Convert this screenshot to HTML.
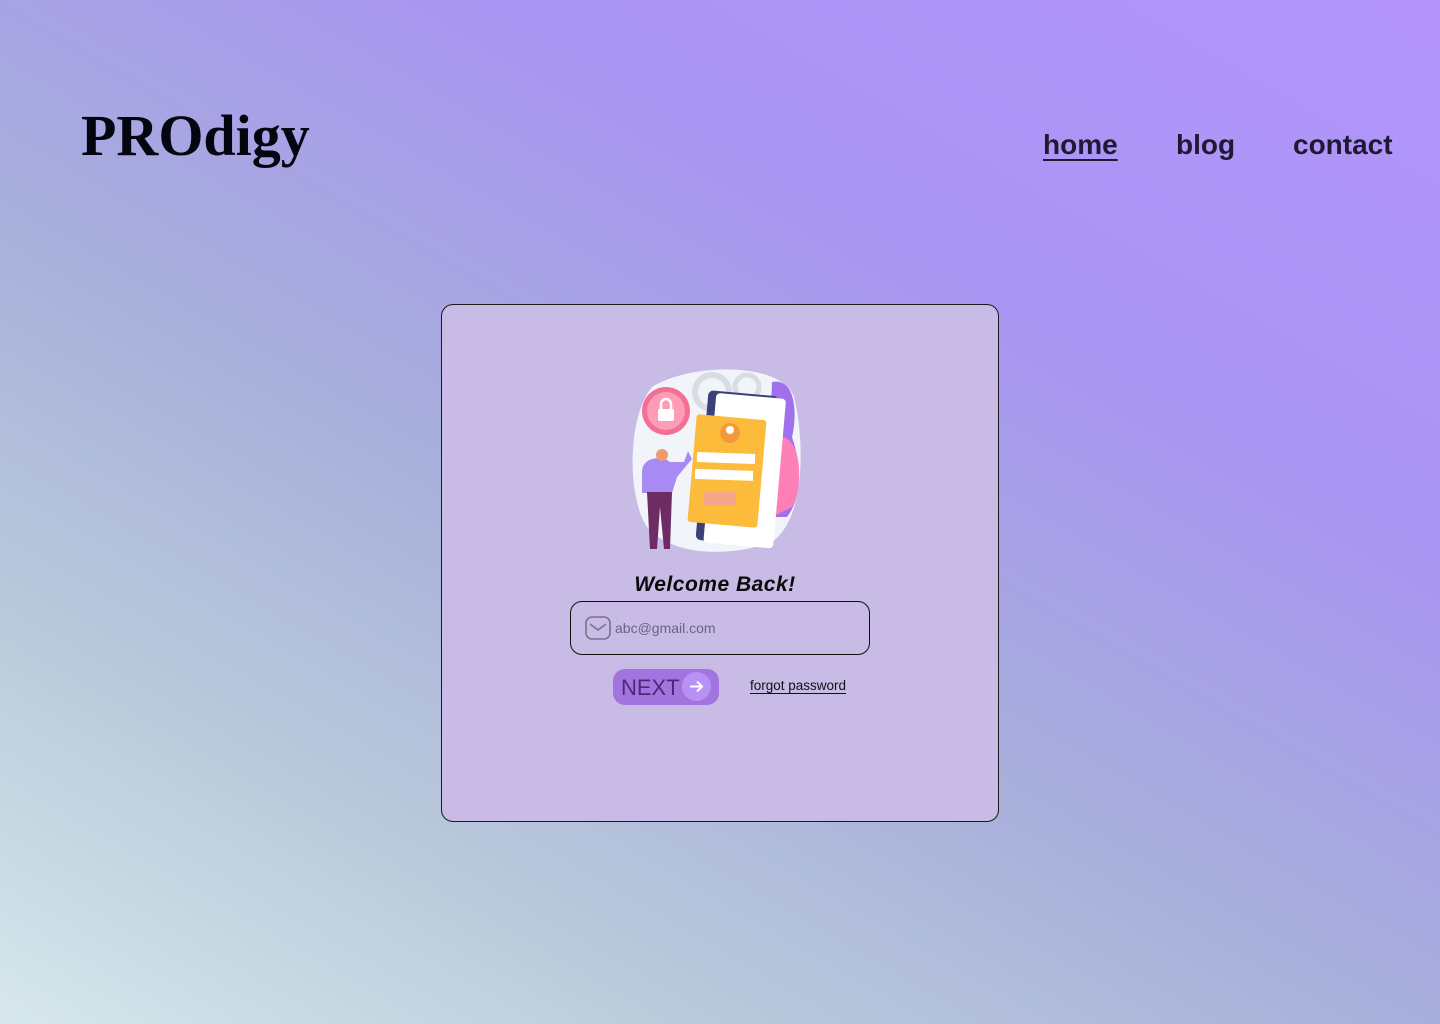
<!DOCTYPE html>
<html><head><meta charset="utf-8"><style>
*{margin:0;padding:0;box-sizing:border-box}
body{width:1440px;height:1024px;overflow:hidden;position:relative;font-family:"Liberation Sans",sans-serif;
background:linear-gradient(30deg,#d6e7ec 0%,#b9cadb 22%,#a7aedb 45%,#a895f2 70%,#b495fd 100%);}
.logo{position:absolute;left:81px;top:102px;font-family:"Liberation Serif",serif;font-weight:bold;font-size:58px;color:#050510;}
.nav{position:absolute;top:129px;font-family:"Liberation Sans",sans-serif;font-size:28px;color:#1e1a33;font-weight:bold;}
.card{position:absolute;left:441px;top:304px;width:558px;height:518px;border:1px solid #1a1a1a;border-radius:12px;background:#c8bbe6}
.wb{position:absolute;left:0;width:100%;top:268px;text-align:center;font-size:21px;font-style:italic;font-weight:bold;color:#0a0a0a;padding-right:10px;font-family:"Liberation Sans",sans-serif;letter-spacing:0.5px}
.inp{position:absolute;left:128px;top:296px;width:300px;height:54px;border:1px solid #111;border-radius:12px}
.inp span{position:absolute;left:44px;top:18px;font-size:14px;color:#6c6480;font-family:"Liberation Sans",sans-serif;}
.btn{position:absolute;left:171px;top:364px;width:106px;height:36px;border-radius:12px;background:#a374e0}
.btn b{position:absolute;left:8px;top:6px;font-weight:normal;font-size:22px;color:#4a2a78;font-family:"Liberation Sans",sans-serif}
.btn i{position:absolute;left:69px;top:3px;width:29px;height:29px;border-radius:50%;background:#b891f7}
.fp{position:absolute;left:308px;top:373px;font-size:13.5px;color:#111;border-bottom:1px solid #111;font-family:"Liberation Sans",sans-serif;line-height:15px}
</style></head><body>
<div class="logo">PROdigy</div>
<div class="nav" style="left:1043px;text-decoration:underline;text-underline-offset:5px;text-decoration-thickness:2px">home</div>
<div class="nav" style="left:1176px">blog</div>
<div class="nav" style="left:1293px">contact</div>
<div class="card">
<svg style="position:absolute;left:190px;top:62px" width="175" height="190" viewBox="0 0 175 190">
<path d="M20 20 C60 -5 150 -5 162 30 C172 70 175 150 140 175 C100 190 40 190 15 160 C-5 130 -5 50 20 20Z" fill="#f1f4f8"/>
<circle cx="80" cy="25" r="17" fill="none" stroke="#d8dde4" stroke-width="6"/>
<circle cx="115" cy="20" r="12" fill="none" stroke="#d8dde4" stroke-width="5"/>
<path d="M140 15 C165 10 165 50 160 70 C170 100 170 130 155 150 L135 150Z" fill="#a070ee"/>
<path d="M145 70 C170 65 172 120 160 140 L140 150Z" fill="#ff7fb8"/>
<rect x="70" y="26" width="70" height="150" rx="5" fill="#3c3f7a" transform="rotate(5 105 100)"/>
<rect x="78" y="28" width="70" height="150" rx="4" fill="#fff" transform="rotate(5 105 100)"/>
<rect x="60" y="50" width="70" height="108" rx="3" fill="#fdbb3c" transform="rotate(5 95 104)"/>
<circle cx="98" cy="66" r="10" fill="#f29a3b"/><circle cx="98" cy="63" r="4" fill="#fff"/>
<rect x="65" y="86" width="58" height="10" fill="#fff" transform="rotate(2 95 90)"/>
<rect x="63" y="103" width="58" height="10" fill="#fff" transform="rotate(2 95 108)"/>
<rect x="72" y="125" width="32" height="13" fill="#f5a889"/>
<circle cx="34" cy="44" r="24" fill="#f36f95"/><circle cx="34" cy="44" r="19" fill="#fd9cb4"/>
<rect x="26" y="42" width="16" height="12" rx="2" fill="#fff"/><path d="M29 42 v-5 a5 5 0 0 1 10 0 v5" fill="none" stroke="#fff" stroke-width="2.5"/>
<path d="M10 105 C10 90 30 88 38 95 L52 95 L56 84 L60 92 L45 110 L40 126 L10 126Z" fill="#a78af2"/>
<path d="M15 125 L40 125 L38 182 L32 182 L28 140 L25 182 L18 182Z" fill="#6d2c63"/>
<circle cx="30" cy="88" r="6" fill="#f09a70"/>
</svg>
<div class="wb">Welcome Back!</div>
<div class="inp">
<svg style="position:absolute;left:14px;top:14px" width="26" height="24" viewBox="0 0 26 24"><rect x="1" y="1" width="24" height="22" rx="6" fill="none" stroke="#7a7288" stroke-width="1.6"/><path d="M5 8 L13 14 L21 8" fill="none" stroke="#7a7288" stroke-width="1.6"/></svg>
<span>abc@gmail.com</span></div>
<div class="btn"><b>NEXT</b><i><svg width="29" height="29" viewBox="0 0 29 29"><path d="M8 14.5h12M15 9.5l5 5-5 5" fill="none" stroke="#fff" stroke-width="2"/></svg></i></div>
<div class="fp">forgot password</div>
</div>
</body></html>
